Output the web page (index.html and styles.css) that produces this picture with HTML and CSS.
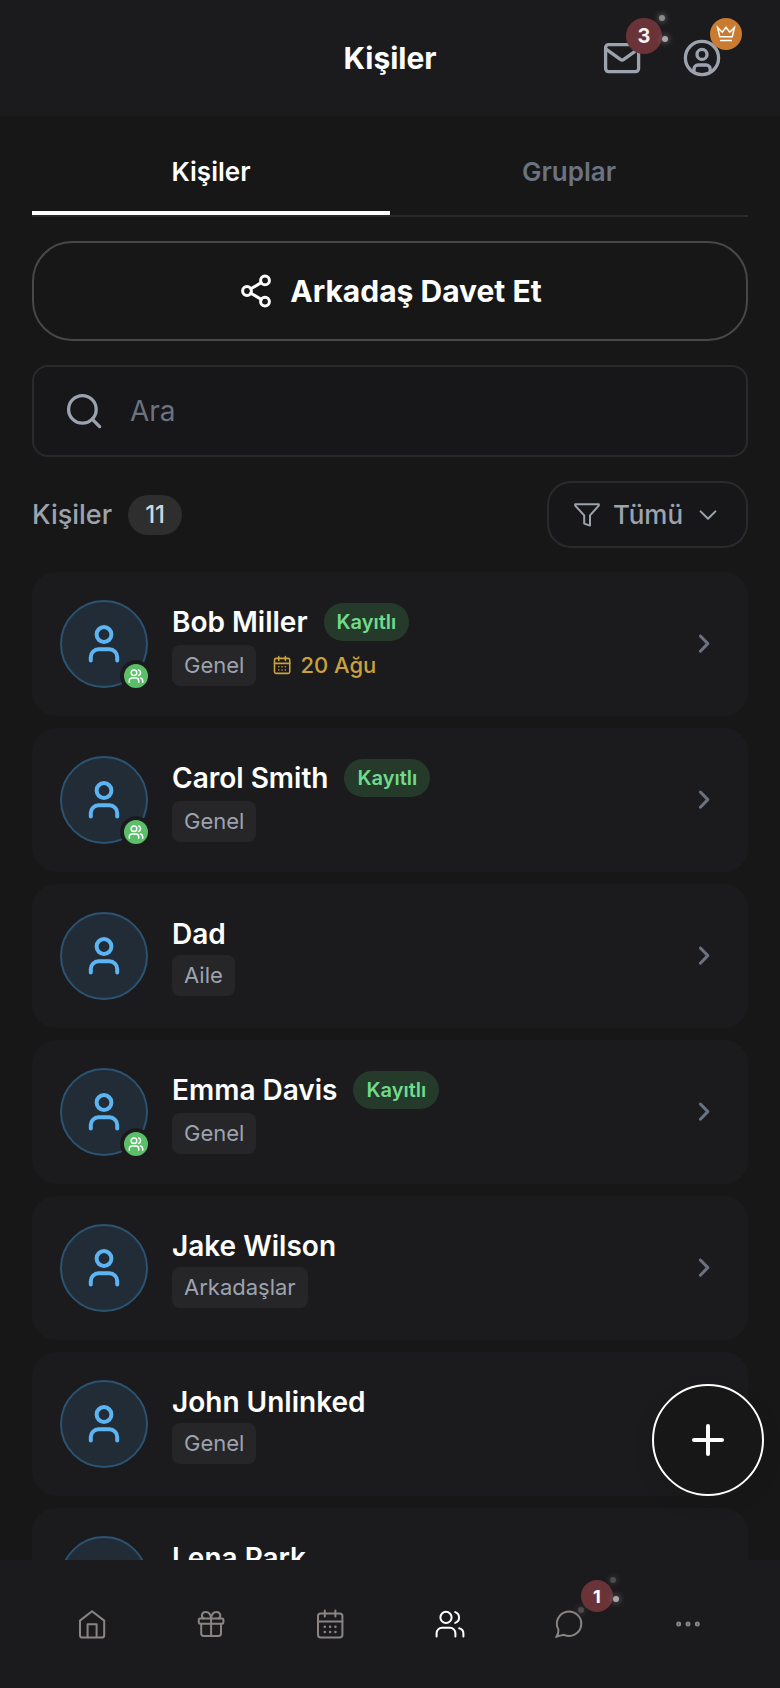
FILE: index.html
```
<!DOCTYPE html>
<html lang="tr">
<head>
  <meta charset="UTF-8" />
  <meta name="viewport" content="width=device-width, initial-scale=1.0" />
  <title>Kişiler</title>
  <link rel="stylesheet" href="styles.css">
</head>
<body>
  <!-- shared icons -->
  <svg class="sprite" aria-hidden="true">
    <symbol id="i-user" viewBox="0 0 40 40">
      <circle cx="20" cy="10.5" r="7.4" />
      <path d="M6.8 36.4V33a7.7 7.7 0 0 1 7.7-7.7h11a7.7 7.7 0 0 1 7.7 7.7v3.4" />
    </symbol>
    <symbol id="i-users" viewBox="0 0 32 32">
      <circle cx="12" cy="9.4" r="5.6" />
      <path d="M2.6 28.4v-3.2a5.4 5.4 0 0 1 5.4-5.4h8a5.4 5.4 0 0 1 5.4 5.4v3.2M21.2 4.1a5.7 5.7 0 0 1 0 10.8M25.2 20.2a5.6 5.6 0 0 1 4.2 5.4v2.8" />
    </symbol>
    <symbol id="i-calendar" viewBox="0 0 32 32">
      <rect x="4" y="5.4" width="24.4" height="24" rx="2.6" />
      <path d="M4 13.4h24.4M10.8 2.6v6M21.4 2.6v6" />
      <path stroke-width="2.6" d="M10.8 18.7h.01M16.1 18.7h.01M21.4 18.7h.01M10.8 24h.01M16.1 24h.01M21.4 24h.01" />
    </symbol>
    <symbol id="i-next" viewBox="0 0 32 32">
      <path d="M12.4 8l7.4 7.6-7.4 7.600" />
    </symbol>
  </svg>

  <div class="app">
    <header class="topbar">
      <h1>Kişiler</h1>
      <div class="actions">
        <button class="icon-btn" aria-label="Mesajlar">
          <svg class="icon icon-40" viewBox="0 0 40 40">
            <rect x="3.6" y="6.6" width="33" height="27" rx="3" />
            <path d="M4 11.2l14.4 10.2a3 3 0 0 0 3.4 0L36.2 11.2" />
          </svg>
          <span class="badge badge-mail">3</span>
          <span class="spark spark-a"></span>
          <span class="spark spark-b"></span>
        </button>
        <button class="icon-btn" aria-label="Profil">
          <svg class="icon icon-40" viewBox="0 0 40 40">
            <circle cx="20" cy="20" r="16.6" />
            <circle cx="20" cy="16.4" r="5" />
            <path d="M12 33.4v-2.400a4 4 0 0 1 4-4h8.200a4 4 0 0 1 4 4v2.400" />
          </svg>
          <span class="crown">
            <svg viewBox="0 0 20 20"><path d="M1.6 3.6l4.7 4.6L10 3.2l3.7 5 4.7-4.6-2.2 9.2H3.8zM4 16.6h12" /></svg>
          </span>
        </button>
      </div>
    </header>

    <main class="content">
      <nav class="tabs">
        <a href="#" class="tab active">Kişiler</a>
        <a href="#" class="tab">Gruplar</a>
      </nav>

      <button class="invite">
        <svg class="icon" viewBox="0 0 36 36">
          <circle cx="27" cy="7.4" r="4.4" />
          <circle cx="9" cy="18" r="4.4" />
          <circle cx="27" cy="28.6" r="4.4" />
          <path d="M12.8 15.8l10.4-6.2M12.8 20.2l10.4 6.2" />
        </svg>
        Arkadaş Davet Et
      </button>

      <div class="search">
        <svg class="icon icon-40" viewBox="0 0 40 40">
          <circle cx="18.4" cy="18.4" r="13.8" />
          <path d="M28.2 28.2l7.4 7.4" />
        </svg>
        <input type="text" placeholder="Ara" aria-label="Ara" />
      </div>

      <div class="list-head">
        <h2>Kişiler</h2>
        <span class="count">11</span>
        <div class="filter">
          <svg class="icon" viewBox="0 0 28 28"><path d="M2.2 3.2h23.6v1.4L17 14.4v10.2l-5.8-2v-8.2L2.2 4.6z" /></svg>
          <select aria-label="Filtre">
            <option>Tümü</option>
            <option>Genel</option>
            <option>Aile</option>
          </select>
          <svg class="icon chev" viewBox="0 0 24 24"><path d="M4.6 8.4L12 15.8l7.4-7.4" /></svg>
        </div>
      </div>

      <ul class="contacts">
        <li>
          <a href="#" class="card">
            <span class="avatar">
              <svg class="icon"><use href="#i-user" /></svg>
              <span class="linked"><svg class="icon"><use href="#i-users" /></svg></span>
            </span>
            <span class="info">
              <span class="row"><span class="name">Bob Miller</span><span class="registered">Kayıtlı</span></span>
              <span class="row">
                <span class="group">Genel</span>
                <span class="date"><svg class="icon"><use href="#i-calendar" /></svg>20 Ağu</span>
              </span>
            </span>
            <svg class="icon next"><use href="#i-next" /></svg>
          </a>
        </li>
        <li>
          <a href="#" class="card">
            <span class="avatar">
              <svg class="icon"><use href="#i-user" /></svg>
              <span class="linked"><svg class="icon"><use href="#i-users" /></svg></span>
            </span>
            <span class="info">
              <span class="row"><span class="name">Carol Smith</span><span class="registered">Kayıtlı</span></span>
              <span class="row"><span class="group">Genel</span></span>
            </span>
            <svg class="icon next"><use href="#i-next" /></svg>
          </a>
        </li>
        <li>
          <a href="#" class="card">
            <span class="avatar"><svg class="icon"><use href="#i-user" /></svg></span>
            <span class="info">
              <span class="row"><span class="name">Dad</span></span>
              <span class="row"><span class="group">Aile</span></span>
            </span>
            <svg class="icon next"><use href="#i-next" /></svg>
          </a>
        </li>
        <li>
          <a href="#" class="card">
            <span class="avatar">
              <svg class="icon"><use href="#i-user" /></svg>
              <span class="linked"><svg class="icon"><use href="#i-users" /></svg></span>
            </span>
            <span class="info">
              <span class="row"><span class="name">Emma Davis</span><span class="registered">Kayıtlı</span></span>
              <span class="row"><span class="group">Genel</span></span>
            </span>
            <svg class="icon next"><use href="#i-next" /></svg>
          </a>
        </li>
        <li>
          <a href="#" class="card">
            <span class="avatar"><svg class="icon"><use href="#i-user" /></svg></span>
            <span class="info">
              <span class="row"><span class="name">Jake Wilson</span></span>
              <span class="row"><span class="group">Arkadaşlar</span></span>
            </span>
            <svg class="icon next"><use href="#i-next" /></svg>
          </a>
        </li>
        <li>
          <a href="#" class="card">
            <span class="avatar"><svg class="icon"><use href="#i-user" /></svg></span>
            <span class="info">
              <span class="row"><span class="name">John Unlinked</span></span>
              <span class="row"><span class="group">Genel</span></span>
            </span>
            <svg class="icon next"><use href="#i-next" /></svg>
          </a>
        </li>
        <li>
          <a href="#" class="card">
            <span class="avatar"><svg class="icon"><use href="#i-user" /></svg></span>
            <span class="info">
              <span class="row"><span class="name">Lena Park</span></span>
              <span class="row"><span class="group">Genel</span></span>
            </span>
            <svg class="icon next"><use href="#i-next" /></svg>
          </a>
        </li>
      </ul>
    </main>

    <button class="fab" aria-label="Kişi ekle">
      <svg class="icon icon-40" viewBox="0 0 40 40"><path d="M20 6v28M6 20h28" /></svg>
    </button>

    <nav class="bottom-nav">
      <a href="#" aria-label="Ana sayfa">
        <svg class="icon" viewBox="0 0 32 32"><path d="M4 12.6L16 3.2l12.2 9.4v14.6a2.4 2.4 0 0 1-2.4 2.4H6.4A2.4 2.4 0 0 1 4 27.2zM11.6 29.4V16.2h9v13.2" /></svg>
      </a>
      <a href="#" aria-label="Hediyeler">
        <svg class="icon" viewBox="0 0 32 32">
          <rect x="3.8" y="10.4" width="24.6" height="5.4" rx="1.2" />
          <path d="M6.2 15.8v9.8a2.4 2.4 0 0 0 2.4 2.4h15a2.4 2.4 0 0 0 2.4-2.4v-9.8M16.1 10.4V28M16.1 10.4C15.6 6 13.4 4 10.8 4 6.6 4 5.8 8.6 8.4 10.4M16.1 10.4C16.6 6 18.8 4 21.4 4c4.2 0 5 4.6 2.4 6.4" />
        </svg>
      </a>
      <a href="#" aria-label="Takvim">
        <svg class="icon"><use href="#i-calendar" /></svg>
      </a>
      <a href="#" class="active" aria-label="Kişiler">
        <svg class="icon"><use href="#i-users" /></svg>
      </a>
      <a href="#" aria-label="Sohbet">
        <span class="nav-icon">
          <svg class="icon" viewBox="0 0 32 32"><path d="M5.4 21.6A12.2 12.2 0 1 1 11 26.8c-2.6.4-5.2.6-7.8 2.2 1.8-2.4 2.6-4.6 2.2-7.4z" /></svg>
          <span class="badge badge-chat">1</span>
          <span class="spark spark-c"></span>
          <span class="spark spark-d"></span>
          <span class="spark spark-e"></span>
        </span>
      </a>
      <a href="#" aria-label="Daha fazla">
        <svg class="icon" viewBox="0 0 32 32">
          <circle cx="6.7" cy="16" r="1.5" />
          <circle cx="16" cy="16" r="1.5" />
          <circle cx="25.3" cy="16" r="1.5" />
        </svg>
      </a>
    </nav>
  </div>
</body>
</html>
```
FILE: styles.css
```
* {
  box-sizing: border-box;
}
body {
  margin: 0;
  background: #171717;
  color: #ffffff;
  font-family: Inter, "Liberation Sans", sans-serif;
}
a {
  color: inherit;
  text-decoration: none;
}
button, input, select {
  font-family: inherit;
  color: inherit;
  background: none;
  border: none;
  padding: 0;
}
button {
  cursor: pointer;
}
.sprite {
  position: absolute;
  width: 0;
  height: 0;
}
.icon {
  display: block;
  flex: none;
  width: 32px;
  height: 32px;
  fill: none;
  stroke: currentColor;
  stroke-width: 2;
  stroke-linecap: round;
  stroke-linejoin: round;
}
.icon-40 {
  width: 40px;
  height: 40px;
  stroke-width: 3.3;
}
.app {
  display: flex;
  flex-direction: column;
  height: 100vh;
}

/* header */
.topbar {
  display: grid;
  grid-template-columns: 1fr auto 1fr;
  align-items: center;
  height: 116px;
  padding: 0 56px;
  background: #1b1b1d;
  flex: none;
}
h1 {
  grid-column: 2;
  margin: 0;
  font-size: 30px;
  font-weight: 700;
}
.actions {
  display: flex;
  justify-content: flex-end;
  gap: 36px;
}
.icon-btn {
  position: relative;
  width: 44px;
  height: 44px;
  display: flex;
  align-items: center;
  justify-content: center;
  color: #9ca3af;
}
.badge {
  position: absolute;
  display: flex;
  align-items: center;
  justify-content: center;
  border-radius: 50%;
  background: #6a3338;
  color: #f3f3f3;
  font-weight: 700;
}
.badge-mail {
  top: -18px;
  left: 26px;
  width: 36px;
  height: 36px;
  font-size: 20px;
}
.crown {
  position: absolute;
  top: -18px;
  left: 30px;
  width: 32px;
  height: 32px;
  padding: 6px;
  border-radius: 50%;
  background: #c97c30;
}
.crown svg {
  display: block;
  fill: none;
  stroke: #ffffff;
  stroke-width: 1.5;
}
.spark {
  position: absolute;
  width: 6px;
  height: 6px;
  border-radius: 50%;
  background: #8c8c8e;
  box-shadow: 0 0 6px #8c8c8e;
}
.spark-a {
  top: -21px;
  left: 59px;
}
.spark-b {
  top: 0;
  left: 62px;
  background: #a8a8aa;
}

/* content */
.content {
  flex: 1;
  min-height: 0;
  overflow-y: auto;
  scrollbar-width: none;
  padding: 0 32px;
}
.tabs {
  display: flex;
  margin-top: 12px;
  border-bottom: 2px solid #2a2a2d;
}
.tab {
  flex: 1;
  height: 87px;
  padding-top: 4px;
  border-bottom: 4px solid transparent;
  line-height: 80px;
  text-align: center;
  font-size: 26px;
  font-weight: 600;
  color: #6b7280;
}
.tab.active {
  color: #ffffff;
  border-color: #ffffff;
}
.invite {
  display: flex;
  align-items: center;
  justify-content: center;
  gap: 16px;
  width: 100%;
  height: 100px;
  margin-top: 24px;
  border: 2px solid #484848;
  border-radius: 40px;
  font-size: 30px;
  font-weight: 700;
}
.invite .icon {
  width: 36px;
  height: 36px;
  stroke-width: 3;
}
.search {
  display: flex;
  align-items: center;
  gap: 26px;
  height: 92px;
  margin-top: 24px;
  padding: 0 30px;
  border: 2px solid #2a2a2d;
  border-radius: 16px;
  background: #17171a;
  color: #9ca3af;
}
.search input {
  flex: 1;
  min-width: 0;
  height: 100%;
  font-size: 28px;
  outline: none;
}
.search input::placeholder {
  color: #6b7280;
  opacity: 1;
}
.list-head {
  display: flex;
  align-items: center;
  gap: 16px;
  margin-top: 24px;
  color: #9ca3af;
}
h2 {
  margin: 0;
  font-size: 27px;
  font-weight: 500;
}
.count {
  padding: 0 17px;
  border-radius: 20px;
  background: #2e2e2e;
  color: #d1d5db;
  font-size: 24px;
  font-weight: 500;
  line-height: 40px;
}
.filter {
  display: flex;
  align-items: center;
  width: 201px;
  height: 67px;
  margin-left: auto;
  padding: 0 26px 0 24px;
  border: 2px solid #2a2a2d;
  border-radius: 24px;
  background: #17171a;
}
.filter .icon {
  width: 28px;
  height: 28px;
}
.filter .icon.chev {
  width: 24px;
  height: 24px;
}
.filter select {
  flex: 1;
  min-width: 0;
  margin-left: 12px;
  appearance: none;
  outline: none;
  font-size: 26px;
  font-weight: 500;
}

/* contact list */
.contacts {
  display: flex;
  flex-direction: column;
  gap: 12px;
  margin: 24px 0;
  padding: 0;
  list-style: none;
}
.card {
  display: flex;
  align-items: center;
  gap: 24px;
  height: 144px;
  padding: 0 28px;
  border-radius: 24px;
  background: #1b1b1d;
}
.avatar {
  position: relative;
  display: flex;
  align-items: center;
  justify-content: center;
  width: 88px;
  height: 88px;
  border: 2px solid #2b5372;
  border-radius: 50%;
  background: #212c37;
  color: #5cb5f2;
}
.avatar > .icon {
  width: 40px;
  height: 40px;
  stroke-width: 4;
}
.linked {
  position: absolute;
  right: -6px;
  bottom: -6px;
  display: flex;
  align-items: center;
  justify-content: center;
  width: 32px;
  height: 32px;
  border: 4px solid #1b1b1d;
  border-radius: 50%;
  background: #5abf68;
  color: #ffffff;
}
.linked .icon {
  width: 16px;
  height: 16px;
  stroke-width: 3;
}
.info {
  flex: 1;
  display: flex;
  flex-direction: column;
  gap: 4px;
}
.row {
  display: flex;
  align-items: center;
  gap: 16px;
}
.name {
  font-size: 28px;
  font-weight: 600;
  line-height: 34px;
}
.registered {
  padding: 0 13px;
  border-radius: 20px;
  background: #263a2b;
  color: #6fdc8c;
  font-size: 20px;
  font-weight: 600;
  line-height: 38px;
}
.group {
  padding: 0 12px;
  border-radius: 8px;
  background: #262628;
  color: #9ca3af;
  font-size: 22px;
  line-height: 41px;
}
.date {
  display: flex;
  align-items: center;
  gap: 8px;
  color: #cba13e;
  font-size: 22px;
  font-weight: 500;
}
.date .icon {
  width: 20px;
  height: 20px;
  stroke-width: 2.5;
}
.next {
  color: #6b7280;
  stroke-width: 3;
}

/* floating add button */
.fab {
  position: fixed;
  right: 16px;
  bottom: 192px;
  display: flex;
  align-items: center;
  justify-content: center;
  width: 112px;
  height: 112px;
  border: 2px solid #ffffff;
  border-radius: 50%;
  background: #171717;
  box-shadow: 0 8px 16px rgba(23, 23, 23, 0.4);
}
.fab .icon {
  stroke-width: 4;
}

/* bottom bar */
.bottom-nav {
  display: flex;
  flex: none;
  height: 128px;
  padding: 0 32px;
  background: #1b1b1d;
  color: #8a8583;
}
.bottom-nav a {
  flex: 1;
  display: flex;
  align-items: center;
  justify-content: center;
}
.bottom-nav a.active {
  color: #ffffff;
}
.nav-icon {
  position: relative;
}
.badge-chat {
  top: -28px;
  left: 28px;
  width: 32px;
  height: 32px;
  color: #ffffff;
  font-size: 18px;
}
.spark-c {
  top: -31px;
  left: 57px;
  background: #4c4c4e;
  box-shadow: 0 0 6px #4c4c4e;
}
.spark-d {
  top: -12px;
  left: 60px;
  background: #a8a8aa;
}
.spark-e {
  top: -1px;
  left: 25px;
  background: #4c4c4e;
  box-shadow: 0 0 6px #4c4c4e;
}
```
